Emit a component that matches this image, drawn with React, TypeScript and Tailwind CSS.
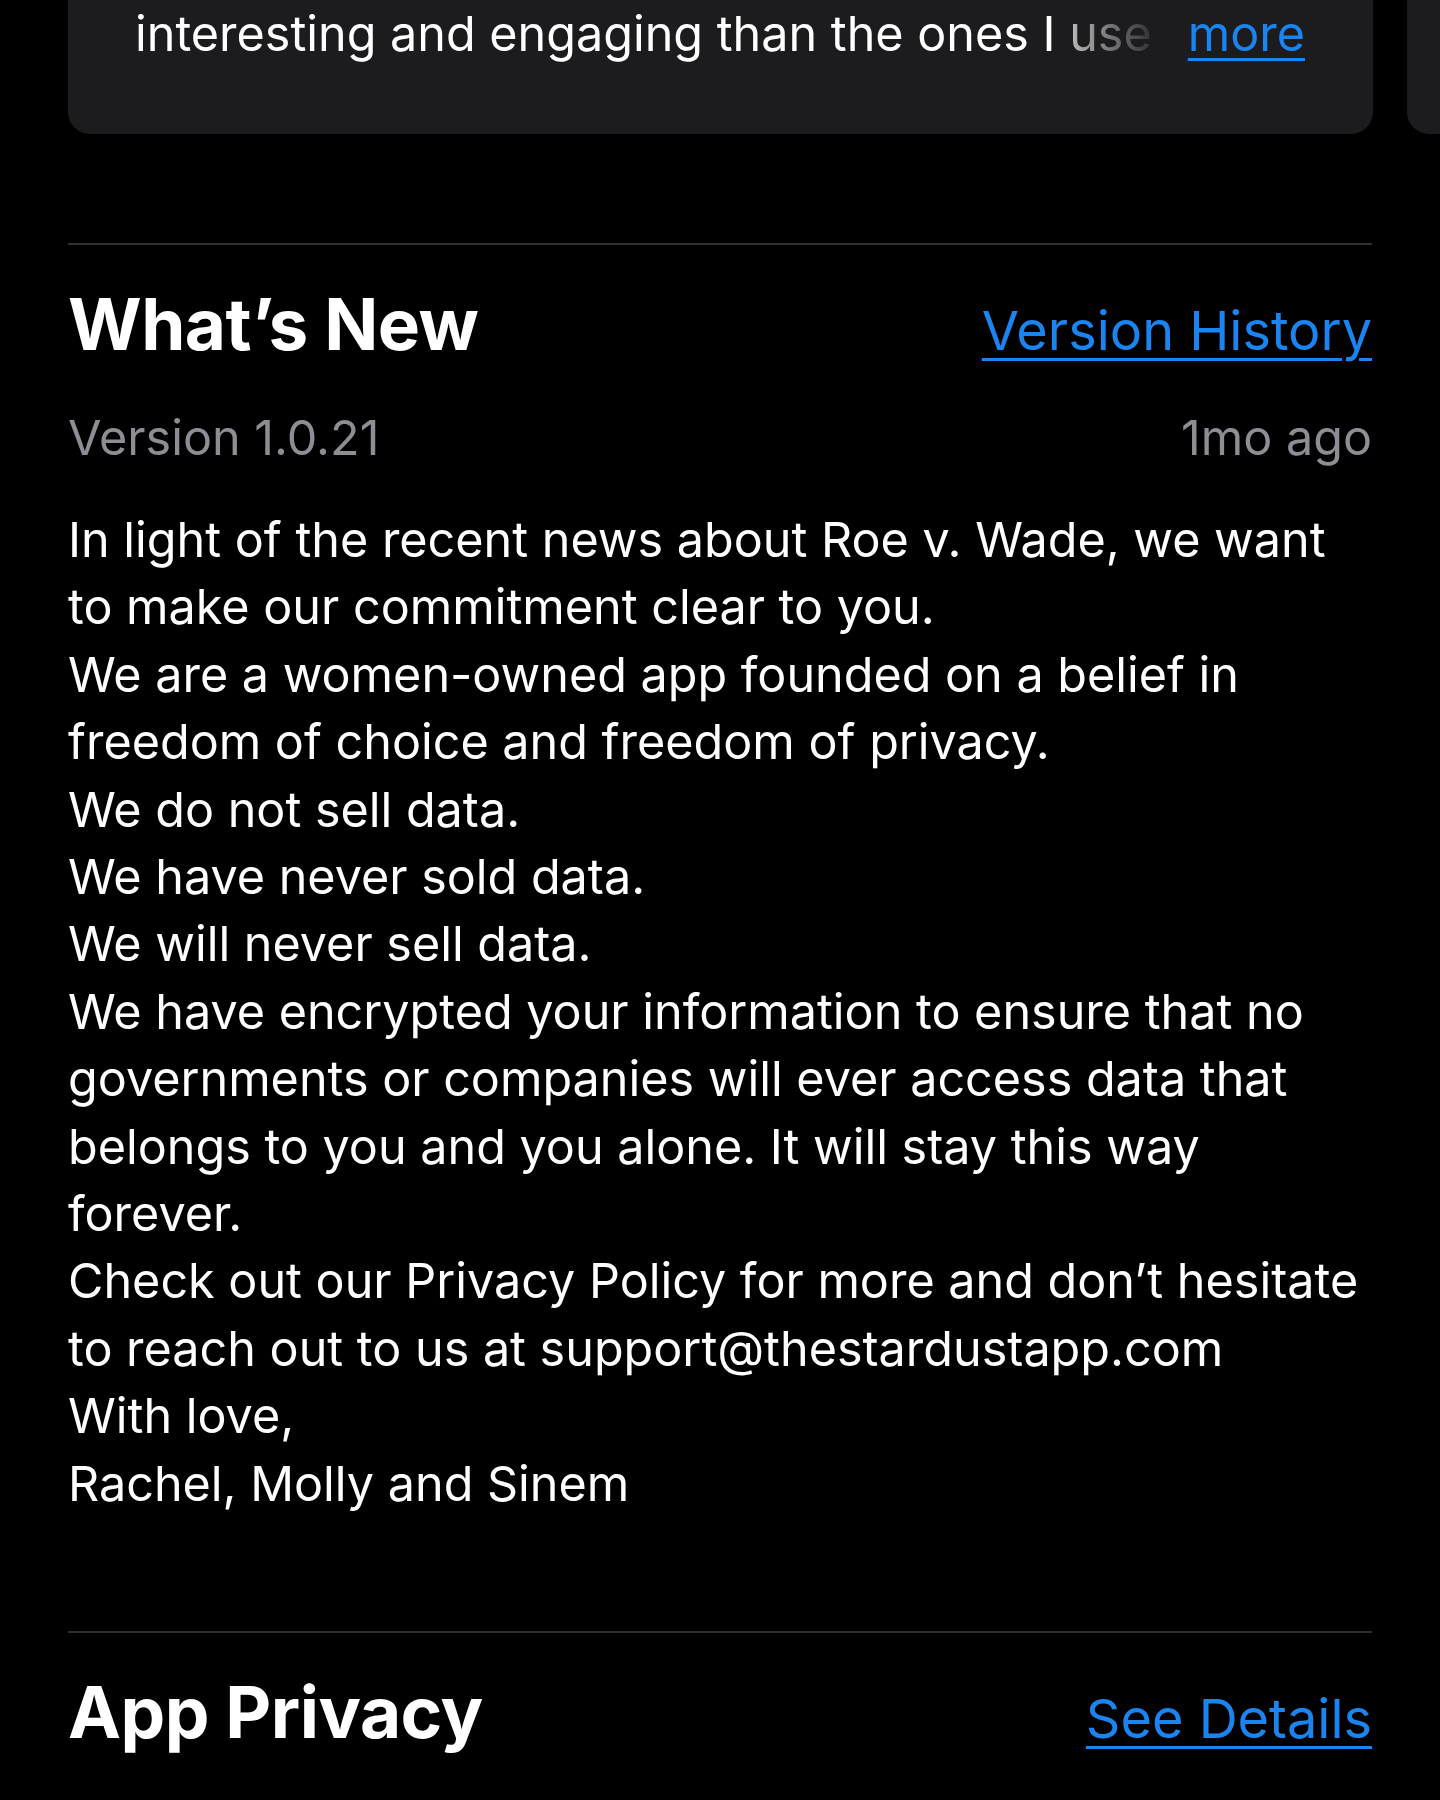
import React from "react";

const bodyLines = [
  "In light of the recent news about Roe v. Wade, we want",
  "to make our commitment clear to you.",
  "We are a women-owned app founded on a belief in",
  "freedom of choice and freedom of privacy.",
  "We do not sell data.",
  "We have never sold data.",
  "We will never sell data.",
  "We have encrypted your information to ensure that no",
  "governments or companies will ever access data that",
  "belongs to you and you alone. It will stay this way",
  "forever.",
  "Check out our Privacy Policy for more and don’t hesitate",
  "to reach out to us at support@thestardustapp.com",
  "With love,",
  "Rachel, Molly and Sinem",
];

const SectionHeader = ({ title, link }: { title: string; link: string }) => (
  <div className="flex items-baseline justify-between">
    <h2 className="text-[71px] font-bold leading-[86px] tracking-[-0.5px] text-white">{title}</h2>
    <a className="text-[54px] leading-[86px] text-[#1a84f0] underline decoration-[3px] underline-offset-[8px]">
      {link}
    </a>
  </div>
);

const App = () => {
  return (
    <div className="min-h-[1800px] w-[1440px] overflow-hidden bg-black font-['Inter',sans-serif] text-white">
      {/* review cards carousel, scrolled so only the bottom shows */}
      <div className="flex gap-[34px] pl-[68px]">
        <div className="h-[134px] w-[1305px] shrink-0 rounded-b-[22px] bg-[#1c1c1e] pl-[67px] pr-[68px]">
          <div className="flex items-baseline justify-between whitespace-nowrap text-[48.5px] leading-[67px]">
            <span>
              interesting and engaging than the ones I{" "}
              <span className="bg-gradient-to-r from-white/70 to-white/10 bg-clip-text text-transparent">use</span>
            </span>
            <a className="text-[#1a84f0] underline decoration-[3px] underline-offset-[7px]">more</a>
          </div>
        </div>
        <div className="h-[134px] w-[1305px] shrink-0 rounded-b-[22px] bg-[#1c1c1e]" />
      </div>

      <div className="px-[68px]">
        <div className="mt-[109px] h-[2px] bg-[#303032]" />

        <div className="mt-[36px]">
          <SectionHeader title="What’s New" link="Version History" />
        </div>

        <div className="mt-[30px] flex justify-between text-[48.5px] leading-[67px] text-[#8d8d93]">
          <span>Version 1.0.21</span>
          <span>1mo ago</span>
        </div>

        <div className="mt-[35px] text-[48.5px] leading-[67.4px]">
          {bodyLines.map((line, i) => (
            <p key={i} className="whitespace-nowrap">
              {line}
            </p>
          ))}
        </div>

        <div className="mt-[114px] h-[2px] bg-[#303032]" />

        <div className="mt-[36px]">
          <SectionHeader title="App Privacy" link="See Details" />
        </div>
      </div>
    </div>
  );
};

export default App;
